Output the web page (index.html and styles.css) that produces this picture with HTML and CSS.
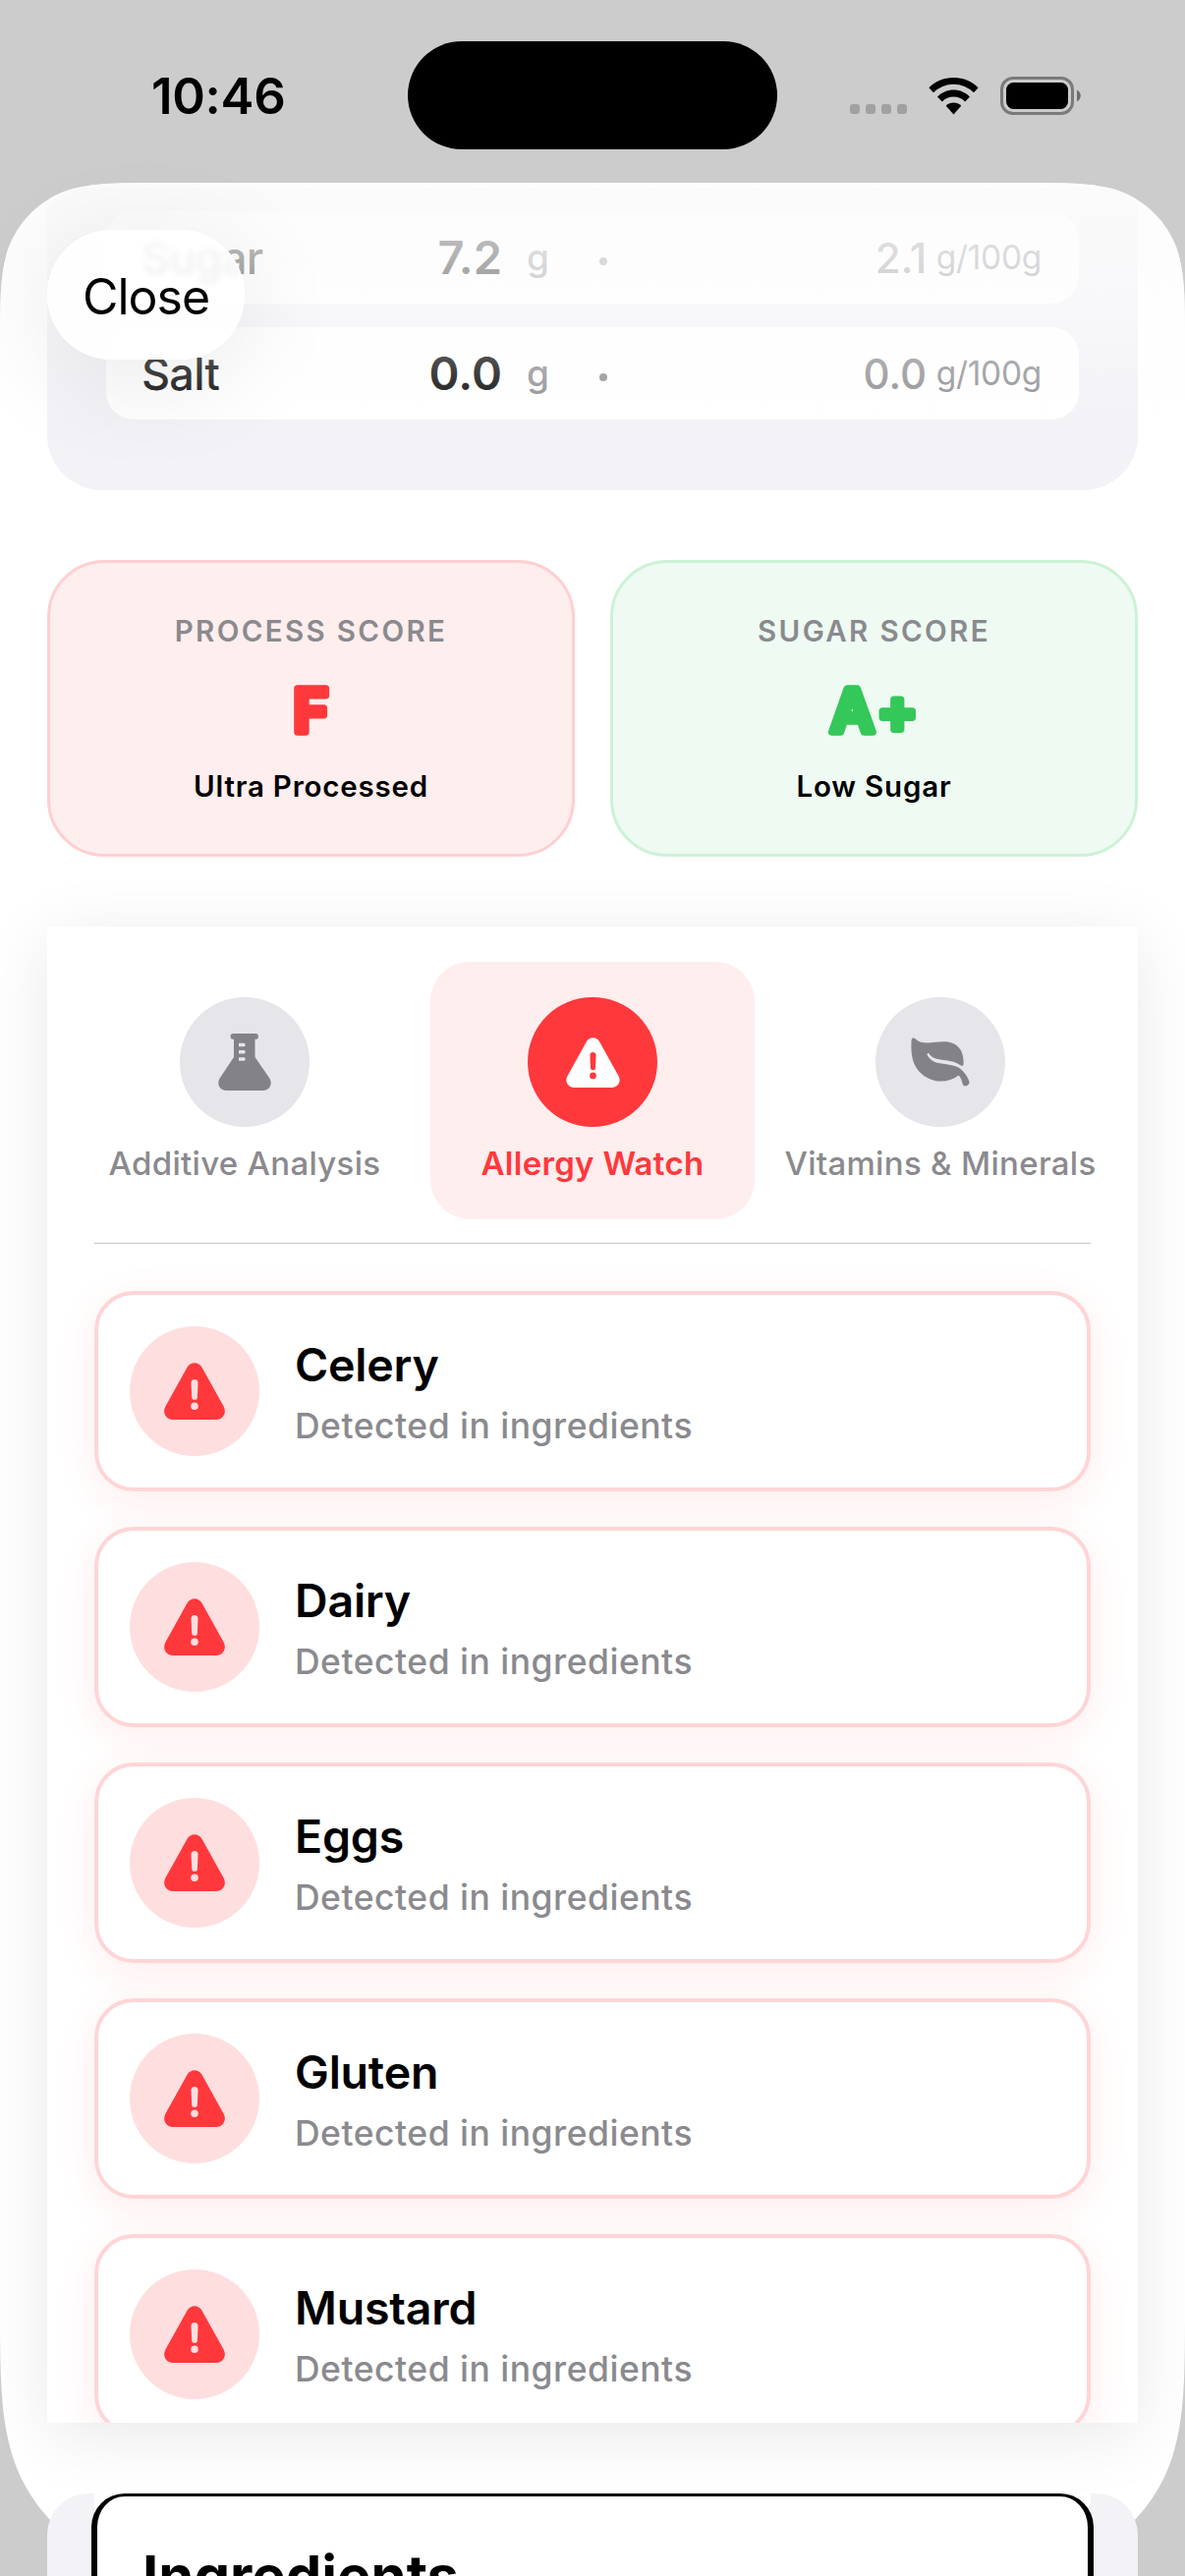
FILE: index.html
```html
<!DOCTYPE html>
<html lang="en">
<head>
<meta charset="utf-8">
<title>Product details</title>
<link rel="stylesheet" href="styles.css">
</head>
<body>
<svg class="defs" aria-hidden="true">
  <symbol id="warning" viewBox="0 0 64 58">
    <path fill-rule="evenodd" d="M24.5 4.8C27.8-1.2 36.2-1.2 39.500 4.800L61.600 44.500C65 50.700 61.200 58 54 58H10C2.800 58-1 50.700 2.400 44.500ZM28.500 20.500L29.200 35A2.850 2.850 0 0 0 34.900 35L35.500 20.500A3.500 3.500 0 0 0 28.500 20.500ZM32 40.500A3.800 3.800 0 1 0 32 48.100A3.800 3.800 0 1 0 32 40.500Z"/>
  </symbol>
</svg>

<div class="screen">
  <header class="status">
    <span class="time">10:46</span>
    <span class="island"></span>
    <div class="indicators">
      <span class="signal"><i></i><i></i><i></i><i></i></span>
      <svg class="wifi" width="51" height="38" viewBox="0 0 51 38">
        <path d="M25.500 0C35.500 0 44.500 4 50.600 10.300L46 15.200A29 29 0 0 0 5 15.200L.4 10.300C6.500 4 15.500 0 25.500 0Z"/>
        <path d="M25.500 12.500C32 12.500 37.800 15.200 42 19.500L37.200 24.400A16.500 16.500 0 0 0 13.800 24.400L9 19.500C13.200 15.200 19 12.500 25.500 12.500Z"/>
        <path d="M25.500 25.500C28.500 25.500 31.200 26.700 33.200 28.700L25.500 37.500L17.800 28.700C19.800 26.700 22.500 25.500 25.500 25.500Z"/>
      </svg>
      <svg class="battery" width="82" height="40" viewBox="0 0 82 40">
        <rect x="1.500" y="1.500" width="72" height="36" rx="11.500" fill="none" stroke="#7a7a7a" stroke-width="3"/>
        <rect x="6" y="6" width="63" height="27" rx="7.500"/>
        <path d="M78 13.500C83 16 83 23 78 25.500Z" fill="#6e6e6e"/>
      </svg>
    </div>
  </header>

  <main class="sheet">
    <section class="nutrients">
      <div class="nutrient">
        <span class="name">Sugar</span><span class="amount">7.2</span><span class="unit">g</span><i class="dot"></i>
        <span class="per"><b>2.1</b> <small>g/100g</small></span>
      </div>
      <div class="nutrient">
        <span class="name">Salt</span><span class="amount">0.0</span><span class="unit">g</span><i class="dot"></i>
        <span class="per"><b>0.0</b> <small>g/100g</small></span>
      </div>
    </section>

    <section class="scores">
      <article class="score bad">
        <h3>PROCESS SCORE</h3>
        <svg class="grade" width="140" height="80"><text x="72" y="62">F</text></svg>
        <p>Ultra Processed</p>
      </article>
      <article class="score good">
        <h3>SUGAR SCORE</h3>
        <svg class="grade" width="140" height="80"><text x="72" y="62">A+</text></svg>
        <p>Low Sugar</p>
      </article>
    </section>

    <section class="analysis">
      <nav class="tabs">
        <a class="tab">
          <span class="disc"><svg width="54" height="58" viewBox="0 0 54 58"><path fill-rule="evenodd" d="M15.500 0H38A2.800 2.800 0 0 1 38 5.800H37.500V24L52 45C56 51 52.500 58 46 58H8C1.500 58-2 51 2 45L16 24V5.800H15.500A2.900 2.900 0 0 1 15.500 0ZM21 9.700V13.200H26.200A1.500 1.700 0 0 0 26.200 9.700ZM21 17V20.500H26.200A1.500 1.700 0 0 0 26.200 17ZM21 24.200V27.700H26.200A1.500 1.700 0 0 0 26.200 24.200Z"/></svg></span>
          <span class="label">Additive Analysis</span>
        </a>
        <a class="tab active">
          <span class="disc"><svg width="57" height="51"><use href="#warning"/></svg></span>
          <span class="label">Allergy Watch</span>
        </a>
        <a class="tab">
          <span class="disc"><svg class="leaf" width="60" height="50" viewBox="0 0 60 50"><path d="M1.500 1C3-.3 4.500 1.500 6.500 3C14 8 26 3.500 36 4.300C48 5.500 54.500 14 53.500 27.500C53.300 29 52 29.300 51 28.600C44 23.500 38 24 30 22.500C24 21.500 21 20 18.500 16.500C17 15 16 17 17 18.500C22 27 30 26 40 28C45 29 48 30 50 31.500C55 35.500 58 40.500 59.500 45C60 48 56 51 53.300 48.500C52 46 51.500 41 48.500 38.500C38 47 22 46.500 11.500 37.500C1 29 0 16 .5 4C.6 2.500 .8 1.500 1.500 1Z"/></svg></span>
          <span class="label">Vitamins &amp; Minerals</span>
        </a>
      </nav>
      <hr>
      <ul class="allergens">
        <li><span class="badge"><svg width="64" height="58"><use href="#warning"/></svg></span><div><h4>Celery</h4><p>Detected in ingredients</p></div></li>
        <li><span class="badge"><svg width="64" height="58"><use href="#warning"/></svg></span><div><h4>Dairy</h4><p>Detected in ingredients</p></div></li>
        <li><span class="badge"><svg width="64" height="58"><use href="#warning"/></svg></span><div><h4>Eggs</h4><p>Detected in ingredients</p></div></li>
        <li><span class="badge"><svg width="64" height="58"><use href="#warning"/></svg></span><div><h4>Gluten</h4><p>Detected in ingredients</p></div></li>
        <li><span class="badge"><svg width="64" height="58"><use href="#warning"/></svg></span><div><h4>Mustard</h4><p>Detected in ingredients</p></div></li>
      </ul>
    </section>

    <section class="ingredients">
      <div class="backing"><div class="frame"><h2>Ingredients</h2></div></div>
    </section>

    <div class="fade"></div>
    <button class="close">Close</button>
  </main>
</div>
</body>
</html>
```

FILE: styles.css
```css
* { box-sizing: border-box; margin: 0; padding: 0; }
body { background: #ccc; font-family: Inter, "Liberation Sans", sans-serif; color: #000; }
.defs { display: none; }
svg { display: block; }
.screen { width: 1206px; height: 2622px; overflow: hidden; background: #ccc; display: flex; flex-direction: column; }

.status { height: 186px; flex: none; display: grid; grid-template-columns: 415px 376px 1fr; padding-top: 42px; }
.time { font-size: 51px; font-weight: 600; line-height: 60px; padding: 26px 0 0 154px; letter-spacing: -.3px; }
.island { height: 110px; background: #000; border-radius: 55px; }
.indicators { display: flex; align-items: flex-start; padding: 36px 0 0 74px; }
.signal { display: flex; gap: 6px; padding-top: 28px; width: 80px; }
.signal i { width: 10px; height: 10px; border-radius: 3px; background: #a1a1a1; }
.wifi { margin-top: 1px; }
.battery { margin-left: 22px; }

.sheet { position: relative; flex: none; height: 2436px; isolation: isolate; }
.sheet::before {
  content: ""; position: absolute; inset: 0; z-index: -1; background: #fff;
  clip-path: path("M165 0C118 0 94 0 68 8C40 18 18 40 8 68C0 94 0 118 0 165V2152C0 2234 0 2275 14 2318C31 2367 69 2405 118 2422C161 2436 202 2436 284 2436H922C1004 2436 1045 2436 1088 2422C1137 2405 1175 2367 1192 2318C1206 2275 1206 2234 1206 2152V165C1206 118 1206 94 1198 68C1188 40 1166 18 1138 8C1112 0 1088 0 1041 0Z");
}

.nutrients {
  margin: 0 48px; height: 313px; padding: 29px 60px 0; background: #f2f2f7; border-radius: 0 0 56px 56px;
  display: flex; flex-direction: column; gap: 24px;
  clip-path: path("M0 22C6 17 12 12 20 8L36 5H1074L1090 8C1098 12 1104 17 1110 22V313H0Z");
}
.nutrient {
  height: 94px; background: #fff; border-radius: 28px; padding: 0 38px 0 36px;
  display: grid; grid-template-columns: 220px 147px 48px 59px 1fr; align-items: baseline; line-height: 94px;
}
.name { font-size: 45px; font-weight: 500; letter-spacing: -.7px; }
.amount { font-size: 47px; font-weight: 600; text-align: right; letter-spacing: 0; }
.unit { font-size: 37px; color: #8a8a8e; text-align: right; font-weight: 500; position: relative; top: -4px; }
.dot { width: 8px; height: 8px; border-radius: 50%; background: #8a8a8e; align-self: center; justify-self: end; margin-top: 3px; }
.per { font-size: 34px; color: #8a8a8e; text-align: right; white-space: nowrap; }
.per b { font-size: 42px; font-weight: 500; letter-spacing: 0; position: relative; top: -1px; }
.per small { font-size: 33.500px; letter-spacing: -.3px; position: relative; top: -5px; }

.fade {
  position: absolute; left: 0; right: 0; top: 0; height: 244px;
  background: linear-gradient(rgba(252,252,252,.84), rgba(252,252,252,.71) 30%, rgba(253,253,253,.57) 50%, rgba(253,253,253,.32) 72%, rgba(253,253,253,.16) 88%, rgba(254,254,254,0));
  clip-path: path("M165 0C118 0 94 0 68 8C40 18 18 40 8 68C0 94 0 118 0 165V244H1206V165C1206 118 1206 94 1198 68C1188 40 1166 18 1138 8C1112 0 1088 0 1041 0Z");
}
.close {
  position: absolute; left: 48px; top: 48px; width: 201px; height: 132px; border: 0; border-radius: 66px;
  background: rgba(255,255,255,.84); backdrop-filter: blur(3px);
  box-shadow: 0 18px 110px rgba(0,0,0,.09), inset 0 0 0 2px rgba(255,255,255,.8);
  font: 400 50px/132px Inter, "Liberation Sans", sans-serif; letter-spacing: -1px; color: #000; padding-top: 2px;
}

.scores { margin: 71px 48px 0; display: grid; grid-template-columns: 1fr 1fr; gap: 36px; }
.score { height: 302px; border: 3px solid; border-radius: 58px; display: flex; flex-direction: column; align-items: center; padding-top: 51px; }
.score h3 { font-size: 29.500px; font-weight: 600; line-height: 36px; letter-spacing: 2.350px; color: #8a8a8e; }
.grade { margin-top: 23px; font-size: 61px; font-weight: 600; }
.grade text { text-anchor: middle; stroke-width: 7.500px; stroke-linejoin: round; letter-spacing: 5px; }
.score p { font-size: 29.500px; font-weight: 600; line-height: 36px; margin-top: 19px; letter-spacing: .8px; }
.bad { background: #ffeeee; border-color: #ffcfd1; }
.bad .grade { fill: #ff383c; stroke: #ff383c; }
.good { background: #eefaf2; border-color: #ccf2d6; }
.good .grade { fill: #34c759; stroke: #34c759; }

.analysis { margin: 71px 48px 0; height: 1523px; background: #fff; box-shadow: 0 12px 66px rgba(0,0,0,.09); clip-path: inset(-90px -48px -72px -48px); padding: 36px; }
.tabs { display: grid; grid-template-columns: repeat(3, 330px); gap: 24px; }
.tab { height: 262px; border-radius: 40px; padding-top: 36px; display: flex; flex-direction: column; align-items: center; color: #8a8a8e; }
.disc { width: 132px; height: 132px; border-radius: 50%; background: #e5e5ea; display: grid; place-items: center; fill: #828287; }
.label { font-size: 33px; line-height: 40px; margin-top: 17px; font-weight: 500; letter-spacing: .3px; white-space: nowrap; }
.active { background: #ffeeee; color: #ff383c; }
.active .disc { background: #ff383c; fill: #fff; }
.active .label { font-weight: 600; }
.analysis hr { border: 0; height: 1px; background: #c6c6c8; margin: 24px 12px 0; }
.allergens { list-style: none; margin: 0 -36px; padding: 48px 48px 0; height: 1200px; overflow: hidden; display: flex; flex-direction: column; gap: 36px; }
.allergens li {
  height: 204px; flex: none; border: 4px solid #ffd5d7; border-radius: 40px; background: #fff;
  box-shadow: 0 10px 42px rgba(255,56,60,.09); display: flex; gap: 36px; padding: 32px;
}
.badge { width: 132px; height: 132px; flex: none; border-radius: 50%; background: #ffdedf; display: grid; place-items: center; fill: #ff383c; }
.allergens h4 { font-size: 46.500px; line-height: 56px; font-weight: 600; letter-spacing: -.2px; margin-top: 11px; }
.allergens p { font-size: 35.500px; line-height: 44px; margin-top: 13px; color: #8a8a8e; font-weight: 450; letter-spacing: .5px; }

.ingredients { margin: 72px 48px 0; height: 84px; background: #f2f2f7; border-radius: 42px 42px 0 0; padding: 0 48px; }
.backing { background: #fff; height: 84px; }
.frame { margin: 0 -3px; height: 84px; border: 6px solid #000; border-top-width: 3px; border-bottom: 0; border-radius: 34px 34px 0 0; padding: 46px 46px 0; overflow: hidden; background: #fff; }
.frame h2 { font-size: 58px; line-height: 70px; font-weight: 700; letter-spacing: 0; }
```
